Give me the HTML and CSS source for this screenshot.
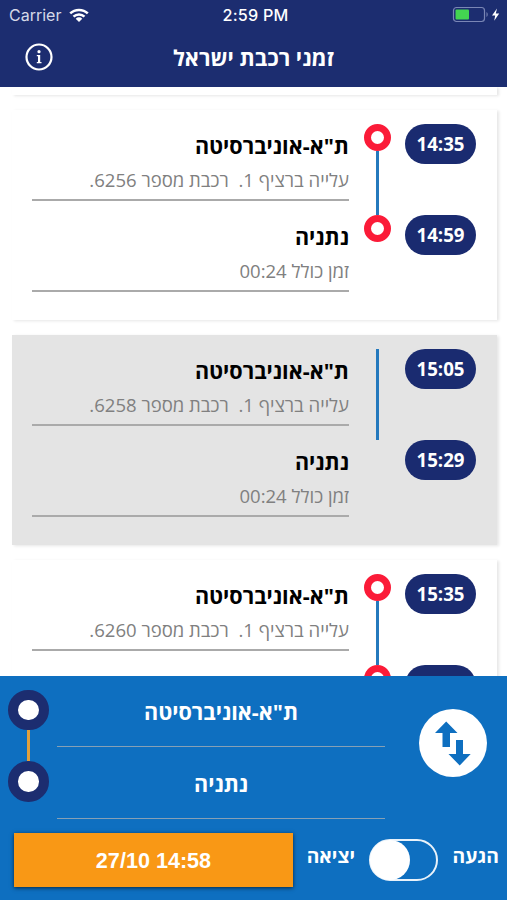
FILE: index.html
```html
<!DOCTYPE html>
<html lang="he">
<head>
<meta charset="utf-8">
<title>זמני רכבת ישראל</title>
<link rel="stylesheet" href="styles.css">
</head>
<body>
<div class="app">
  <header class="header">
    <div class="status">
      <div class="carrier"><span>Carrier</span>
        <svg class="wifi" width="20" height="15" viewBox="0 0 20 15" fill="none" stroke="#fff" stroke-width="2.5"><path d="M1.2 5.4C6 .7 14 .7 18.800 5.400M4.500 8.700c3.100-3 7.900-3 11 0"/><path d="M10 14l-3.300-3.300c1.900-1.800 4.700-1.800 6.600 0z" fill="#fff" stroke="none"/></svg>
      </div>
      <div class="clock">2:59 PM</div>
      <div class="power">
        <svg width="50" height="18" viewBox="0 0 50 18"><rect x="1.500" y="1.500" width="31" height="14" rx="3" fill="none" stroke="#7a86b5" stroke-width="1.200"/><rect x="3.500" y="3.500" width="13.500" height="10" rx="1" fill="#43d551"/><path d="M34.500 6c1.600.8 1.600 4.200 0 5z" fill="#7a86b5"/><path d="M45 2.500l-5 7h3.200l-1 5.300 5-7.300h-3.400z" fill="#fff"/></svg>
      </div>
    </div>
    <div class="titlebar">
      <svg class="info" width="28" height="28" viewBox="0 0 28 28"><circle cx="14" cy="14" r="12.500" fill="none" stroke="#fff" stroke-width="2.200"/><circle cx="14" cy="8.700" r="1.600" fill="#fff"/><path d="M11.800 12H15.200v7h1.300v1.300h-4.700V19H13v-5.700h-1.200z" fill="#fff"/></svg>
      <h1 dir="rtl">זמני רכבת ישראל</h1>
    </div>
  </header>

  <main class="list">
    <section class="card card-end"></section>
    <section class="card">
      <div class="stops" dir="rtl">
        <div class="stop"><h2>ת"א-אוניברסיטה</h2><p>עלייה ברציף 1.&nbsp; רכבת מספר 6256.</p></div>
        <div class="stop"><h2>נתניה</h2><p>זמן כולל 00:24</p></div>
      </div>
      <div class="track"><i class="dot"></i><i class="rail"></i><i class="dot"></i></div>
      <div class="times"><span class="pill">14:35</span><span class="pill">14:59</span></div>
    </section>
    <section class="card selected">
      <div class="stops" dir="rtl">
        <div class="stop"><h2>ת"א-אוניברסיטה</h2><p>עלייה ברציף 1.&nbsp; רכבת מספר 6258.</p></div>
        <div class="stop"><h2>נתניה</h2><p>זמן כולל 00:24</p></div>
      </div>
      <div class="track"><i class="rail full"></i></div>
      <div class="times"><span class="pill">15:05</span><span class="pill">15:29</span></div>
    </section>
    <section class="card">
      <div class="stops" dir="rtl">
        <div class="stop"><h2>ת"א-אוניברסיטה</h2><p>עלייה ברציף 1.&nbsp; רכבת מספר 6260.</p></div>
        <div class="stop"></div>
      </div>
      <div class="track"><i class="dot"></i><i class="rail"></i><i class="dot"></i></div>
      <div class="times"><span class="pill">15:35</span><span class="pill"></span></div>
    </section>
  </main>

  <footer class="search">
    <div class="route">
      <div class="route-track"><i class="node"></i><i class="link"></i><i class="node"></i></div>
      <div class="fields" dir="rtl"><div class="field">ת"א-אוניברסיטה</div><div class="field">נתניה</div></div>
      <button class="swap" aria-label="החלפה">
        <svg width="68" height="68" viewBox="0 0 68 68" fill="#0e6fc0"><path d="M27.200 12.500L38.500 24H31V38H23.500V24H16z"/><path d="M37 31H44V45H51.700L40.700 56.500L29.500 45H37z"/></svg>
      </button>
    </div>
    <div class="options">
      <button class="date">27/10 14:58</button>
      <span class="option depart" dir="rtl">יציאה</span>
      <span class="toggle"><i class="knob"></i></span>
      <span class="option arrive" dir="rtl">הגעה</span>
    </div>
  </footer>
</div>
</body>
</html>
```
FILE: styles.css
```css
* { box-sizing: border-box; }
body { margin: 0; font-family: "Open Sans", "Noto Sans", sans-serif; background: #fff; }
h1, h2, p { margin: 0; font-weight: 400; }
i { display: block; }
button { border: 0; padding: 0; font: inherit; }
svg { display: block; }

.app { width: 507px; height: 900px; display: flex; flex-direction: column; overflow: hidden; }

.header { height: 87px; flex: none; background: #1c2d70; color: #fff; }
.status { height: 30px; display: grid; grid-template-columns: 1fr auto 1fr; align-items: center; padding: 0 5px 0 9px; font-family: Inter, sans-serif; font-size: 16.2px; }
.carrier { display: flex; align-items: center; gap: 8px; color: #d5d9e8; }
.carrier span { font-size: 16px; }
.clock { font-weight: 500; letter-spacing: .2px; }
.power { justify-self: end; }
.titlebar { height: 57px; display: grid; grid-template-columns: 1fr auto 1fr; padding: 0 25px; }
.info { margin-top: 13px; }
.titlebar h1 { font-size: 21.800px; font-weight: 700; line-height: 56px; }

.list { flex: 1; min-height: 0; overflow: hidden; display: flex; flex-direction: column; gap: 15px; padding: 0 10px 0 12px; }
.card { flex: none; height: 210px; display: grid; grid-template-columns: 317px 56px 71px; padding: 13px 20px; background: #fff; box-shadow: 2px 1px 3px rgba(0, 0, 0, .1); }
.card-end { height: 8px; padding: 0; }
.selected { background: #e4e4e4; }
.stops { display: flex; flex-direction: column; }
.stops .stop:first-child { margin-bottom: 13px; }
.stop { height: 78px; border-bottom: 2px solid #aaa; }
.stop h2 { font-size: 21.600px; font-weight: 700; line-height: 30px; padding-top: 8px; color: #000; white-space: nowrap; }
.stop p { font-size: 18.550px; line-height: 26px; margin-top: 6px; color: #808080; white-space: nowrap; }
.track { display: flex; flex-direction: column; align-items: center; padding-top: .5px; }
.dot { width: 27px; height: 27px; border: 7px solid #fb1b38; border-radius: 50%; background: #fff; }
.rail { width: 3px; height: 64px; background: #2479bd; }
.rail.full { height: 91px; }
.times { display: flex; flex-direction: column; gap: 51px; padding-top: .5px; }
.pill { height: 40px; border-radius: 20px; background: #1a2b70; color: #fff; text-align: center; font-size: 18.700px; font-weight: 700; line-height: 39px; }

.search { flex: none; height: 224px; background: #0e6fc0; color: #fff; }
.route { height: 143px; display: grid; grid-template-columns: 41px 328px 68px; padding: 0 8px; column-gap: 8px; }
.route-track { padding-top: 13.500px; display: flex; flex-direction: column; align-items: center; }
.node { width: 40.500px; height: 40.500px; border: 10px solid #1c2d70; border-radius: 50%; background: #fff; }
.link { width: 3px; height: 31px; background: #e2a03c; }
.field { height: 71px; border-bottom: 1.5px solid #86a0b5; text-align: center; font-size: 21.600px; font-weight: 700; line-height: 72px; }
.field + .field { height: 72px; line-height: 73px; }
.swap { margin: 33px 0 0 26px; width: 68px; height: 68px; border-radius: 50%; background: #fff; }
.options { display: flex; align-items: flex-start; padding: 14px 8px 0 14px; }
.date { flex: none; width: 279px; height: 54px; padding-top: 2px; background: #f99815; color: #fff; font: 700 21.600px "Liberation Sans", sans-serif; box-shadow: 0 1px 4px rgba(0, 0, 0, .65); }
.option { font-size: 19.300px; font-weight: 700; line-height: 28px; margin-top: 9px; white-space: nowrap; }
.depart { width: 48px; margin-left: 14px; }
.toggle { flex: none; width: 69px; height: 42px; margin: 6px 0 0 14px; border: 2px solid #e9f2fa; border-radius: 21px; }
.knob { width: 40px; height: 40px; margin: -1px; border-radius: 50%; background: #fff; }
.arrive { width: 48px; margin-left: 13px; }
```
